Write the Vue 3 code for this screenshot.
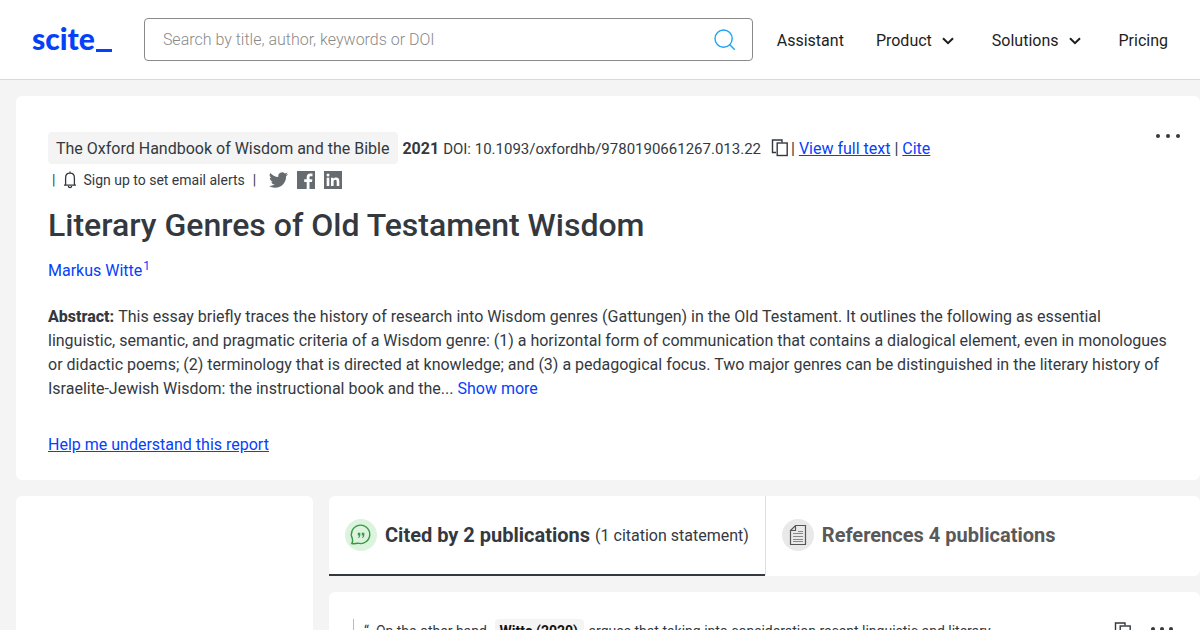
<script setup>
import { ref } from 'vue'

const query = ref('')
const navItems = [
  { label: 'Assistant', menu: false },
  { label: 'Product', menu: true },
  { label: 'Solutions', menu: true },
  { label: 'Pricing', menu: false }
]
const abstractLines = [
  'This essay briefly traces the history of research into Wisdom genres (Gattungen) in the Old Testament. It outlines the following as essential',
  'linguistic, semantic, and pragmatic criteria of a Wisdom genre: (1) a horizontal form of communication that contains a dialogical element, even in monologues',
  'or didactic poems; (2) terminology that is directed at knowledge; and (3) a pedagogical focus. Two major genres can be distinguished in the literary history of',
  'Israelite-Jewish Wisdom: the instructional book and the...'
]
</script>

<template>
  <div class="page">
    <header class="header">
      <a href="#" class="logo" aria-label="scite">scite<span class="cursor"></span></a>
      <form class="search" role="search" @submit.prevent>
        <input v-model="query" type="text" aria-label="Search" placeholder="Search by title, author, keywords or DOI" />
        <button type="submit" aria-label="Submit search">
          <svg width="22" height="22" viewBox="0 0 22 22" fill="none" stroke="#1ca3f4" stroke-width="1.4">
            <circle cx="9.6" cy="9.6" r="8.6" />
            <path d="M15.6 15.6 L20.8 20.8" />
          </svg>
        </button>
      </form>
      <nav class="nav">
        <template v-for="item in navItems" :key="item.label">
          <button v-if="item.menu" type="button" class="nav-item">
            {{ item.label }}
            <svg width="24" height="8" viewBox="0 0 24 8" fill="none" stroke="#1d1d1d" stroke-width="2">
              <path d="M7 1.2 L12 6.2 L17 1.2" />
            </svg>
          </button>
          <a v-else href="#" class="nav-item">{{ item.label }}</a>
        </template>
      </nav>
    </header>

    <main class="content">
      <section class="card paper">
        <button type="button" class="more" aria-label="More options"><i></i><i></i><i></i></button>
        <div class="meta">
          <span class="journal">The Oxford Handbook of Wisdom and the Bible</span>
          <b>2021</b>
          <span class="doi">DOI: 10.1093/oxfordhb/9780190661267.013.22</span>
          <button type="button" class="copy" aria-label="Copy DOI">
            <svg width="18" height="18" viewBox="0 0 18 18" fill="none" stroke="#33393f" stroke-width="1.4">
              <path d="M5 13.5 H1.5 V1 H11 V3.5" />
              <rect x="6.2" y="4" width="10" height="12.5" />
            </svg>
          </button>
          <span class="links">| <a href="#">View full text</a> | <a href="#">Cite</a></span>
        </div>
        <div class="alerts">
          <span>|</span>
          <button type="button" class="signup">
            <svg width="14" height="18" viewBox="0 0 14 18" fill="none" stroke="#33393f" stroke-width="1.3">
              <path d="M1 14.2 H13 M2.6 14 V7 C2.6 4 4.4 2.2 7 2.2 C9.6 2.2 11.4 4 11.4 7 V14 M7 0.4 V2.2" />
              <path d="M5.4 15 C5.4 17.2 8.6 17.2 8.6 15" />
            </svg>
            Sign up to set email alerts
          </button>
          <span>|</span>
          <div class="share">
            <a href="#" aria-label="Share on Twitter">
              <svg width="19" height="18" viewBox="0 2 24 20" fill="#666b70"><path d="M23.95 4.57a10 10 0 0 1-2.82.77 4.96 4.96 0 0 0 2.16-2.72c-.95.55-2 .95-3.13 1.18a4.92 4.92 0 0 0-8.38 4.48C7.69 8.1 4.07 6.13 1.64 3.16a4.93 4.93 0 0 0 1.52 6.57 4.9 4.9 0 0 1-2.23-.61v.06c0 2.39 1.7 4.38 3.95 4.83a5 5 0 0 1-2.21.08 4.94 4.94 0 0 0 4.6 3.42A9.87 9.87 0 0 1 0 19.54a14 14 0 0 0 7.55 2.21c9.05 0 14-7.5 14-13.98 0-.21 0-.42-.02-.63a9.94 9.94 0 0 0 2.46-2.55z" /></svg>
            </a>
            <a href="#" aria-label="Share on Facebook">
              <svg width="18" height="18" viewBox="0 0 18 18"><path fill="#666b70" d="M0 0 H18 V18 H12.5 V11 H15 L15.4 8.2 H12.5 V6.5 C12.5 5.6 12.9 5.2 13.8 5.2 H15.5 V2.6 C15 2.5 14.3 2.4 13.3 2.4 C11 2.4 9.7 3.8 9.7 6.1 V8.2 H7.2 V11 H9.7 V18 H0 Z" /></svg>
            </a>
            <a href="#" aria-label="Share on LinkedIn">
              <svg width="18" height="18" viewBox="0 0 18 18"><rect width="18" height="18" fill="#666b70" /><g fill="#fff"><circle cx="4" cy="4" r="1.5" /><rect x="2.7" y="6.7" width="2.6" height="8.3" /><path d="M7 6.7 H9.5 V7.9 C10 7 11 6.5 12.1 6.5 C14.6 6.5 15.3 8.1 15.3 10.4 V15 H12.7 V10.9 C12.7 9.7 12.5 8.8 11.3 8.8 C10 8.8 9.6 9.7 9.6 10.9 V15 H7 Z" /></g></svg>
            </a>
          </div>
        </div>
        <h1>Literary Genres of Old Testament Wisdom</h1>
        <p class="author"><a href="#">Markus Witte<sup>1</sup></a></p>
        <p class="abstract">
          <b>Abstract: </b><template v-for="(line, i) in abstractLines" :key="i"><br v-if="i" />{{ line }}</template>&#32;<a href="#">Show more</a>
        </p>
        <a href="#" class="help">Help me understand this report</a>
      </section>

      <div class="columns">
        <aside class="card"></aside>
        <div class="results">
          <div class="card tabs" role="tablist">
            <button type="button" role="tab" aria-selected="true" class="tab active">
              <svg width="32" height="32" viewBox="0 0 32 32">
                <circle cx="16" cy="16" r="16" fill="#dcf3de" />
                <path d="M6.8 24.6 C7.8 23.4 7.8 21.6 7.4 19.6 A9.2 9.2 0 1 1 13 24.2 C11 24.2 9 25 6.8 24.6 Z" fill="none" stroke="#379a43" stroke-width="1.4" />
                <g fill="#379a43"><path d="M12.8 13.7 H15.3 V16 C15.3 17.8 14.5 18.7 13.2 19 V18 C13.9 17.7 14.1 17.2 14.1 16.4 H12.8 Z" /><path d="M16.8 13.7 H19.3 V16 C19.3 17.8 18.5 18.7 17.2 19 V18 C17.9 17.7 18.1 17.2 18.1 16.4 H16.8 Z" /></g>
              </svg>
              <strong>Cited by 2 publications</strong>
              <span>(1 citation statement)</span>
            </button>
            <button type="button" role="tab" aria-selected="false" class="tab">
              <svg width="32" height="32" viewBox="0 0 32 32" fill="none">
                <circle cx="16" cy="16" r="16" fill="#e9e9e9" />
                <path d="M8.5 11.5 L13.5 6.5 H23.5 V25.5 H8.5 Z M8.5 11.5 H13.5 V6.5" stroke="#555" stroke-width="1.2" />
                <path d="M16 12.5 H21 M11 14.5 H21 M11 17.5 H21 M11 20.5 H21 M11 22.5 H21" stroke="#888" />
              </svg>
              <strong>References 4 publications</strong>
            </button>
          </div>
          <article class="card statement">
            <blockquote>“<span class="quote">On the other hand,</span><mark>Witte (2020)</mark> argues that taking into consideration recent linguistic and literary</blockquote>
            <button type="button" class="copy" aria-label="Copy statement">
              <svg width="18" height="18" viewBox="0 0 18 18" fill="none" stroke="#33393f" stroke-width="1.4">
                <path d="M5 13.5 H1.5 V1 H11 V3.5" />
                <rect x="6.2" y="4" width="10" height="12.5" />
              </svg>
            </button>
            <button type="button" class="dots" aria-label="Statement options"><i></i><i></i><i></i></button>
          </article>
        </div>
      </div>
    </main>
  </div>
</template>

<style>
body { margin: 0; }
</style>

<style scoped>
* { box-sizing: border-box; }
.page { height: 100vh; overflow: hidden; background: #f4f4f4; color: #33393f; font: 16px/24px Roboto, "Liberation Sans", sans-serif; }
a { color: #0641fa; }
button { border: 0; padding: 0; background: none; color: inherit; font: inherit; }
svg { display: block; flex: none; }
.header { display: flex; align-items: center; height: 80px; padding: 0 32px; background: #fff; border-bottom: 1px solid #d9d9d9; }
.logo { display: flex; align-items: flex-end; margin-right: 32px; padding-bottom: 4px; font: 900 30px/32px Lato, sans-serif; text-decoration: none; }
.cursor { width: 16px; height: 3px; margin: 0 0 2px 1px; background: currentColor; }
.search { display: flex; flex: 1; align-items: center; height: 43px; padding: 0 16px 0 18px; border: 1px solid #8a8a8a; border-radius: 4px; }
.search input { flex: 1; min-width: 0; border: 0; outline: 0; padding: 0; background: none; font: 300 16px/24px Roboto, sans-serif; }
.search input::placeholder { color: #8a8a8a; opacity: 1; }
.nav { display: flex; gap: 32px; margin-left: 24px; padding-top: 2px; }
.nav-item { display: flex; align-items: center; gap: 4px; color: #1d1d1d; text-decoration: none; }
.content { padding: 16px 0 0 16px; }
.card { background: #fff; border-radius: 6px; }
.paper { position: relative; padding: 36px 32px 23px; }
.more { position: absolute; top: 37px; right: 20px; }
.more, .dots { display: flex; justify-content: space-between; width: 24px; height: 6px; align-items: center; }
.more i, .dots i { width: 4px; height: 4px; border-radius: 50%; background: #33393f; }
.meta { display: flex; align-items: center; white-space: nowrap; }
.journal { padding: 5px 9px 3px 8px; margin-right: 4px; border-radius: 4px; background: #f4f4f4; }
.meta b, .doi, .links { padding-top: 2px; }
.doi { margin-left: 4px; font-size: 15px; }
.meta .copy { margin: 0 2px 0 10px; }
.alerts { display: flex; align-items: center; height: 32px; padding-left: 4px; font-size: 14px; }
.signup { display: flex; align-items: center; gap: 6px; margin: 0 8px; }
.share { display: flex; gap: 9px; margin-left: 13px; }
h1 { margin: 9px 0 0; font-size: 32px; line-height: 40px; font-weight: 500; }
.author { margin: 14px 0 0; }
.author a, .abstract a { text-decoration: none; }
sup { font-size: 12px; line-height: 0; margin-left: 1px; }
.abstract { margin: 22px 0 32px; white-space: nowrap; }
.abstract b { font-weight: 800; }
.columns { display: flex; gap: 16px; margin-top: 16px; }
aside { flex: 0 0 297px; }
.results { flex: 1; min-width: 0; }
.tabs { display: flex; height: 80px; }
.tab { display: flex; align-items: center; padding: 0 16px; border-bottom: 2px solid transparent; color: #595959; white-space: nowrap; }
.tab.active { border-bottom-color: #33393f; color: #33393f; }
.tab + .tab { border-left: 1px solid #dedede; }
.tab strong { margin: 0 5px 0 8px; font-size: 20px; font-weight: 700; }
.tab span { padding-top: 2px; }
.statement { display: flex; margin-top: 16px; padding: 27px 24px; font-size: 14px; }
blockquote { flex: 1; margin: 0; padding-left: 10px; border-left: 1px solid #bbb; white-space: nowrap; }
.quote { margin: 0 5px 0 7px; }
mark { margin-right: 1px; padding: 4px 6px 4px 5px; border-radius: 4px; background: #f4f4f4; color: #111; font-weight: 700; }
.statement .dots { width: 22px; margin: 7px 3px 0 19px; }
</style>
